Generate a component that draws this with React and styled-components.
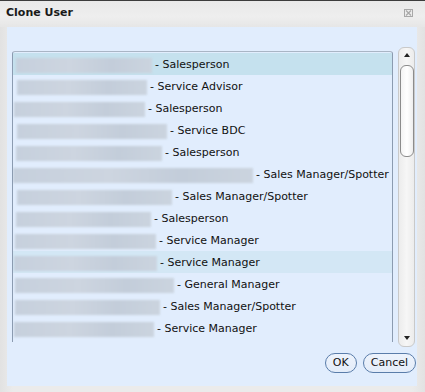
import React from "react";
import styled, { createGlobalStyle } from "styled-components";

const Global = createGlobalStyle`
  html, body { margin: 0; padding: 0; background: #e6e6e6; }
  body { font-family: "DejaVu Sans", Verdana, sans-serif; }
`;

const Dialog = styled.div`
  width: 425px;
  height: 392px;
  box-sizing: border-box;
  border-top: 1px solid #3c3c3c;
  background: linear-gradient(90deg, #e2e2e2 0%, #ebebeb 3%, #ebebeb 97%, #e2e2e2 100%);
  display: flex;
  flex-direction: column;
`;

const TitleBar = styled.div`
  height: 26px;
  flex: none;
  display: flex;
  align-items: center;
  justify-content: space-between;
  padding: 0 12px 0 6px;
  background: linear-gradient(#e9e9e9, #eeeeee 60%, #e6e6e6);
`;

const Title = styled.span`
  font-family: "DejaVu Sans", Verdana, sans-serif;
  font-weight: bold;
  font-size: 11px;
  color: #1a1a1a;
  margin-top: -4px;
`;

const Close = styled.svg`
  width: 9px;
  height: 8px;
  margin-top: -3px;
`;

const Panel = styled.div`
  flex: 1;
  margin: 0 8px 6px 7px;
  background: #e1edfd;
  display: flex;
  flex-direction: column;
  padding: 20px 0 0 5px;
  min-height: 0;
`;

const ListArea = styled.div`
  display: flex;
  align-items: flex-start;
  gap: 5px;
`;

const ListFrame = styled.div`
  margin-top: 4px;
  width: 381px;
  height: 291px;
  flex: none;
  border: 1px solid #8b9bb0;
  border-bottom: none;
  border-top-color: #a9b5c5;
  border-radius: 3px 3px 0 0;
  overflow: hidden;
  padding-top: 1px;
  box-sizing: border-box;
`;

const Row = styled.div`
  height: 22px;
  display: flex;
  align-items: center;
  background: ${(p) => p.$bg || "transparent"};
  padding-left: ${(p) => p.$left}px;
  font-size: 11px;
  color: #111;
  white-space: nowrap;
`;

const Blur = styled.div`
  height: 15px;
  flex: none;
  margin-top: 2px;
  background: linear-gradient(90deg, #c6d0dd, #cdd5e0 40%, #c3cdda 70%, #cbd4df);
  filter: blur(1.2px);
  margin-right: 3px;
`;

const Label = styled.span`
  line-height: 14px;
  margin-top: 1px;
`;

const Scrollbar = styled.div`
  width: 17px;
  height: 300px;
  flex: none;
  box-sizing: border-box;
  border: 1px solid #c9c9c9;
  border-radius: 6px;
  background: linear-gradient(90deg, #ececec, #f6f6f6 50%, #ececec);
  display: flex;
  flex-direction: column;
  align-items: center;
  padding-top: 5px;
`;

const Arrow = styled.div`
  width: 0;
  height: 0;
  border-left: 3px solid transparent;
  border-right: 3px solid transparent;
  ${(p) => (p.$down ? "border-top: 4px solid #222;" : "border-bottom: 4px solid #222;")}
`;

const Thumb = styled.div`
  margin-top: 8px;
  width: 14px;
  height: 92px;
  box-sizing: border-box;
  border: 1px solid #8c8c8c;
  border-radius: 6px;
  background: linear-gradient(90deg, #f4f4f4, #ffffff 50%, #eeeeee);
`;

const Spacer = styled.div`
  flex: 1;
`;

const DownWrap = styled.div`
  padding-bottom: 6px;
`;

const Footer = styled.div`
  display: flex;
  justify-content: flex-end;
  gap: 6px;
  padding: 6px 1px 0 0;
`;

const Button = styled.button`
  height: 20px;
  box-sizing: border-box;
  padding: 0 ${(p) => p.$pad}px;
  border: 1.5px solid #5a7daa;
  border-radius: 10px;
  background: linear-gradient(#edf3fc, #e3ecf9);
  font-family: "DejaVu Sans", Verdana, sans-serif;
  font-size: 11px;
  color: #111;
  line-height: 16px;
`;

const rows = [
  [16, 136, "Salesperson", "#c5e1ee"],
  [17, 130, "Service Advisor"],
  [14, 131, "Salesperson"],
  [17, 150, "Service BDC"],
  [16, 146, "Salesperson"],
  [13, 240, "Sales Manager/Spotter"],
  [17, 155, "Sales Manager/Spotter"],
  [16, 135, "Salesperson"],
  [15, 141, "Service Manager"],
  [14, 143, "Service Manager", "#d3e7f5"],
  [15, 159, "General Manager"],
  [15, 145, "Sales Manager/Spotter"],
  [14, 140, "Service Manager"],
];

export default function App() {
  return (
    <>
      <Global />
      <Dialog>
        <TitleBar>
          <Title>Clone User</Title>
          <Close viewBox="0 0 9 8">
            <rect x="0.5" y="0.5" width="8" height="7" fill="none" stroke="#a8a8a8" />
            <path d="M2 1.5 L7 6.5 M7 1.5 L2 6.5" stroke="#a8a8a8" strokeWidth="1.2" />
          </Close>
        </TitleBar>
        <Panel>
          <ListArea>
            <ListFrame>
              {rows.map(([left, w, label, bg], i) => (
                <Row key={i} $left={left - 13} $bg={bg}>
                  <Blur style={{ width: w }} />
                  <Label>- {label}</Label>
                </Row>
              ))}
            </ListFrame>
            <Scrollbar>
              <Arrow />
              <Thumb />
              <Spacer />
              <DownWrap>
                <Arrow $down />
              </DownWrap>
            </Scrollbar>
          </ListArea>
          <Footer>
            <Button $pad={7}>OK</Button>
            <Button $pad={7}>Cancel</Button>
          </Footer>
        </Panel>
      </Dialog>
    </>
  );
}
